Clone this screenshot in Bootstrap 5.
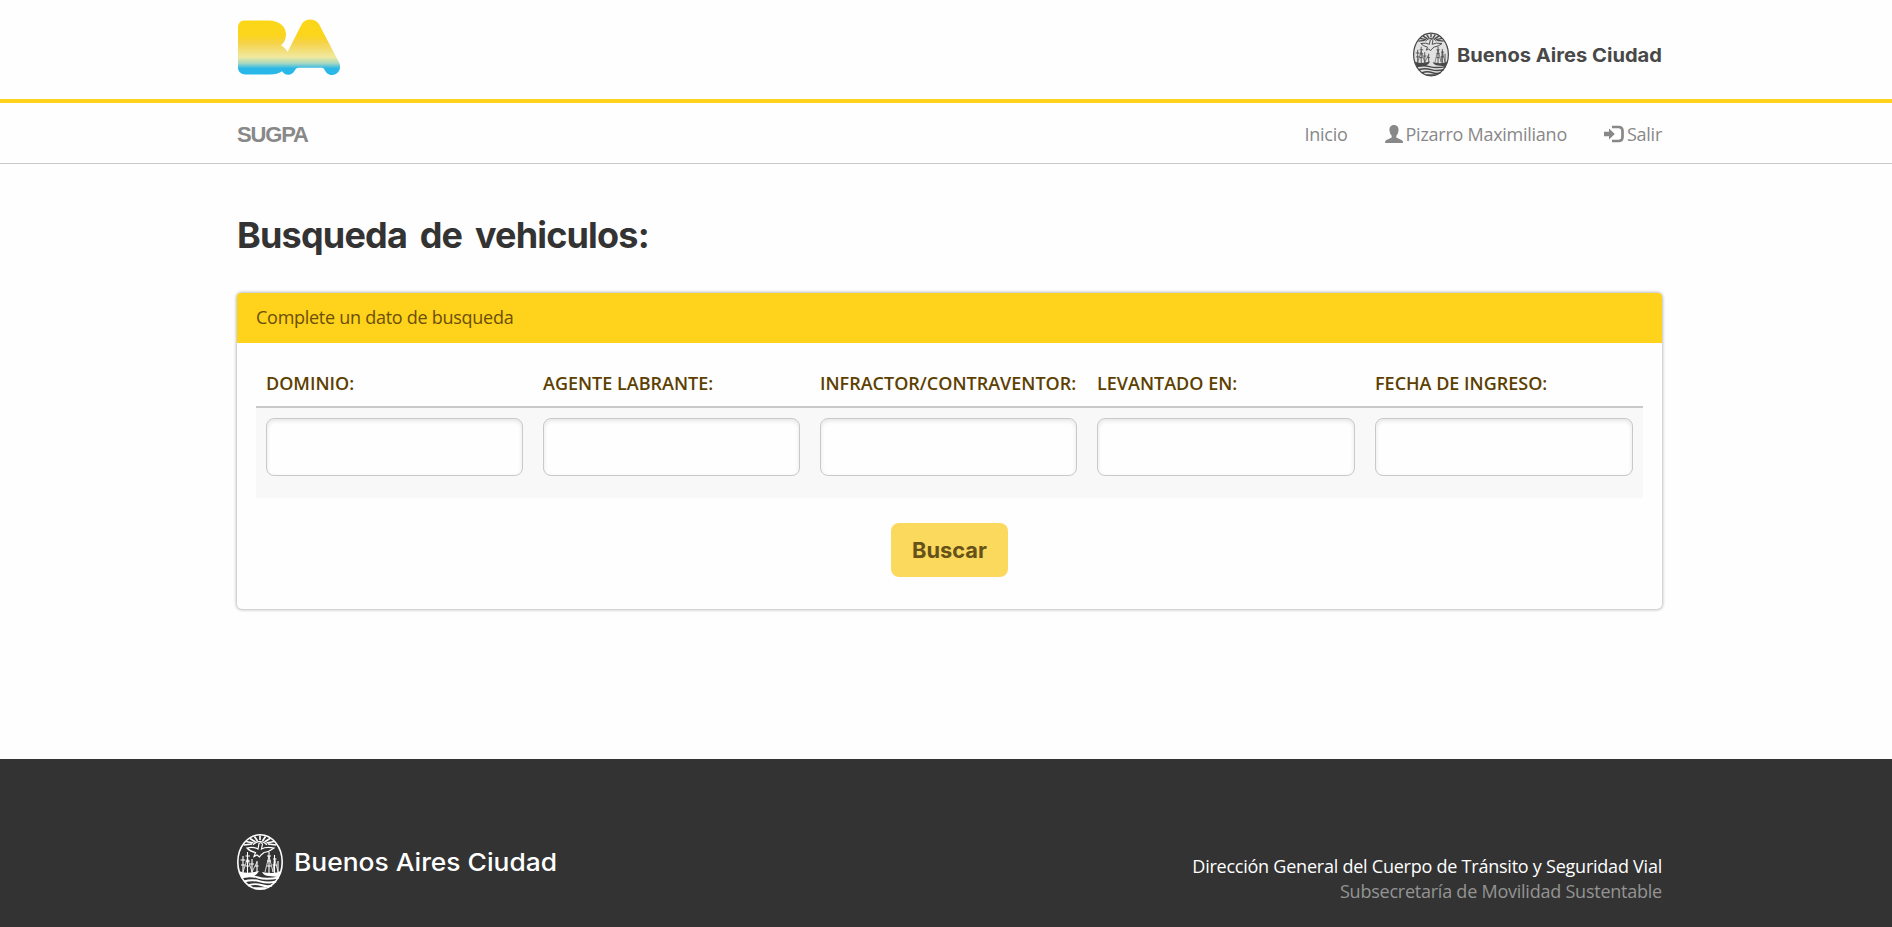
<!DOCTYPE html>
<html lang="es">
<head>
<meta charset="utf-8">
<meta name="viewport" content="width=device-width, initial-scale=1">
<title>SUGPA - Busqueda de vehiculos</title>
<link href="https://cdn.jsdelivr.net/npm/bootstrap@5.3.0/dist/css/bootstrap.min.css" rel="stylesheet">
<style>
body{font-family:"Open Sans",sans-serif;font-size:18px;line-height:25px;background:#fefefe;color:#333;overflow:hidden}
.wrap{width:1425px;margin-left:237px}
.topbar{height:103px;border-bottom:4px solid #ffd21c}
.ba-logo{margin-top:19px;margin-left:1px}
.site-nav{height:61px;border-bottom:1px solid #c9c9c9;padding:0}
.site-nav .wrap{height:60px}
.brand{font:700 22px/30px "Liberation Sans",sans-serif;color:#888;letter-spacing:-1.15px;margin-top:4px}
.site-nav .nav{gap:37px}
.site-nav .nav-link{padding:0;color:#888;font-weight:400;letter-spacing:-.26px;line-height:25px;margin-top:3px}
.site-nav .nav-link svg{margin:3px 3px 0 0;color:#888}
h1.title{font:700 36px/44px Inter,sans-serif;color:#333;margin:49px 0 36px;letter-spacing:-.82px;word-spacing:5px;white-space:nowrap}
.search-card{border:0;border-radius:5px;height:316px;background:#fefefe;box-shadow:0 0 3px 1px rgba(0,0,0,.26)}
.search-card .card-header{height:50px;padding:12px 19px;background:#ffd21c;color:#6b4f08;border:0;border-radius:4px 4px 0 0;font-weight:400;letter-spacing:-.27px}
.search-card .card-body{padding:19px}
.search-table{table-layout:fixed;margin:0;border-collapse:separate;border-spacing:0;--bs-table-bg:transparent}
.search-table .col-a{width:277px}
.search-table .col-b{width:278px}
.search-table th{height:46px;padding:9px 0 10px 10px;border-bottom:2px solid #c9c9c9;color:#5c4000;font-weight:600;font-size:18px;line-height:25px;white-space:nowrap}
.search-table td{height:90px;padding:10px;background:#f8f8f8;border:0}
.search-table .form-control{height:58px;border:1px solid #c9c9c9;border-radius:8px;background:#fefefe;box-shadow:inset 0 2px 4px rgba(0,0,0,.1)}
.btn-search{width:117px;height:54px;margin-top:25px;border:0;border-radius:8px;background:#fbd95d;color:#665219;font:700 21.8px/55px Inter,sans-serif;padding:0}
.btn-search:hover{background:#fbd95d;color:#665219}
.site-footer{height:168px;margin-top:150px;background:#333;color:#fff}
.footer-logo{margin-top:75px}
.footer-text{margin-top:95px;line-height:25px;letter-spacing:-.235px;white-space:nowrap}
.footer-text .sub{color:#949494}
</style>
</head>
<body>
<svg class="d-none">
  <symbol id="seal" viewBox="0 0 46 56">
    <ellipse cx="23" cy="28" rx="22.2" ry="27.2" fill="none" stroke="currentColor" stroke-width="1.6"/>
    <path d="M7 11L15 10M9 7.5L16.5 9M13 4.5L18.5 8M17.5 2.5L20.5 7M23 1.5V6M28.5 2.5L25.5 7M33 4.5L27.5 8M37 7.5L29.5 9M39 11L31 10" stroke="currentColor" stroke-width="1.7" fill="none"/>
    <path d="M16 10.7Q23 4 30 10.7" fill="none" stroke="currentColor" stroke-width="1.2"/>
    <path d="M10 14Q17 12.5 21 15L22 9.5Q24 7.8 25.5 10L24.5 15Q29 12.5 37 14Q32 18 27 18.5L24 21L22.5 23L20 21L17 22.5L18.5 18.5Q13 17.5 10 14Z" fill="none" stroke="currentColor" stroke-width="1.2"/>
    <path d="M6 22V39M10.5 18V39M15 25V39M20 27V38M32 18V39M37.5 21V39M41 27V38" stroke="currentColor" stroke-width="1.1"/>
    <path d="M3.5 26H8M4 31H8M8.5 22H13M8.5 27H13M8.5 32H12.5M13 30H17M18 32H21.5M30 22H34M30 27H34M30 32H34M36 25H39.5M35.5 31H39.5" stroke="currentColor" stroke-width="1.1"/>
    <path d="M6 38L10.5 24L15 38L20 28M28 38L32 22L36 38L37.5 24L41 38" fill="none" stroke="currentColor" stroke-width=".8"/>
    <path d="M2 37Q8 40.5 22 37Q20 41 16 42.5L5 44ZM44 37Q37 40.5 25 38Q27 42 32 42L41 43Z" fill="currentColor"/>
    <path d="M4 43.5Q13 41 21 43.5T42 43.5M7 47.5Q15 45 23 47.3T39 47.5M11 51.5Q18 49 24 51T35 51.5M17 54.3H29" fill="none" stroke="currentColor" stroke-width="1.9"/>
  </symbol>
</svg>

<header class="topbar">
  <div class="wrap d-flex justify-content-between align-items-start">
    <svg class="ba-logo" width="102" height="56" viewBox="18 19 102 56">
      <defs><linearGradient id="ba" gradientUnits="userSpaceOnUse" x1="0" y1="19" x2="0" y2="75">
        <stop offset="0" stop-color="#fbd717"/><stop offset=".29" stop-color="#fbd51b"/><stop offset=".42" stop-color="#f6d246"/><stop offset=".68" stop-color="#f0e9a0"/><stop offset=".79" stop-color="#a9d8c0"/><stop offset=".88" stop-color="#2cb8e6"/><stop offset="1" stop-color="#25b7ea"/>
      </linearGradient></defs>
      <path fill="url(#ba)" d="M25 20.4H48C60 20.4 66 27 66 34.5C66 39 64.2 43 61 45.4C64 47 66 49 67.7 51.8L81.5 24.5C85 17.7 95.5 17.7 99.2 24.5L119.6 63.5C121.5 69.5 117.5 75 112 75C108 75 106 72.5 104.7 70C104 68.4 102.8 67.8 101 67.8H79C76.5 67.8 75.7 69 74.5 71C71.8 75.8 65.3 76 62 71.2C58.5 73.4 55 74.4 50 74.4H25.5C21 74.4 18 71.7 18 67.5V27.5C18 23 20.6 20.4 25 20.4Z"/>
    </svg>
    <svg width="250" height="46" viewBox="0 0 250 46" style="margin-top:32px;color:#484848">
      <ellipse cx="19" cy="22.5" rx="17" ry="21.5" fill="#484848" fill-opacity=".16"/>
      <use href="#seal" x="1" y="0" width="36" height="45"/>
      <text x="45" y="30.3" textLength="205" lengthAdjust="spacingAndGlyphs" font-family="Inter, sans-serif" font-size="19.3" font-weight="700" fill="#484848">Buenos Aires Ciudad</text>
    </svg>
  </div>
</header>

<nav class="site-nav">
  <div class="wrap d-flex justify-content-between align-items-center">
    <span class="brand">SUGPA</span>
    <ul class="nav">
      <li class="nav-item"><a class="nav-link" href="#">Inicio</a></li>
      <li class="nav-item"><a class="nav-link d-flex" href="#"><svg width="18" height="18" viewBox="0 0 18 18"><path fill="currentColor" d="M9 0C12.2 0 13.8 2.3 13.5 5.5C13.3 7.8 12.5 9.5 11.3 10.8V12.5L17 15.3Q18 15.8 18 18H0Q0 15.8 1 15.3L6.7 12.5V10.8C5.5 9.5 4.7 7.8 4.5 5.5C4.2 2.3 5.8 0 9 0Z"/></svg>Pizarro Maximiliano</a></li>
      <li class="nav-item"><a class="nav-link d-flex" href="#"><svg width="20" height="18" viewBox="0 0 20 18"><path fill="currentColor" d="M0 6.7H5V3.5L10.8 9L5 14.5V11.3H0Z"/><path d="M8 2H14.5Q18.5 2 18.5 6V12Q18.5 16 14.5 16H8" fill="none" stroke="currentColor" stroke-width="2.7"/></svg>Salir</a></li>
    </ul>
  </div>
</nav>

<main class="wrap">
  <h1 class="title">Busqueda de vehiculos:</h1>
  <div class="card search-card">
    <div class="card-header">Complete un dato de busqueda</div>
    <div class="card-body text-center">
      <table class="table search-table text-start">
        <colgroup><col class="col-a"><col class="col-a"><col class="col-a"><col class="col-b"><col class="col-b"></colgroup>
        <thead><tr><th>DOMINIO:</th><th>AGENTE LABRANTE:</th><th>INFRACTOR/CONTRAVENTOR:</th><th>LEVANTADO EN:</th><th>FECHA DE INGRESO:</th></tr></thead>
        <tbody><tr>
          <td><input type="text" class="form-control" aria-label="Dominio"></td>
          <td><input type="text" class="form-control" aria-label="Agente labrante"></td>
          <td><input type="text" class="form-control" aria-label="Infractor"></td>
          <td><input type="text" class="form-control" aria-label="Levantado en"></td>
          <td><input type="text" class="form-control" aria-label="Fecha de ingreso"></td>
        </tr></tbody>
      </table>
      <button type="button" class="btn btn-search">Buscar</button>
    </div>
  </div>
</main>

<footer class="site-footer d-flex">
  <div class="wrap d-flex justify-content-between align-items-start">
    <svg class="footer-logo" width="322" height="56" viewBox="0 0 322 56">
      <use href="#seal" width="46" height="56"/>
      <text x="57" y="37" textLength="263" lengthAdjust="spacingAndGlyphs" font-family="Inter, sans-serif" font-size="24.3" font-weight="500" fill="#fff">Buenos Aires Ciudad</text>
    </svg>
    <div class="footer-text text-end">
      <div>Dirección General del Cuerpo de Tránsito y Seguridad Vial</div>
      <div class="sub">Subsecretaría de Movilidad Sustentable</div>
    </div>
  </div>
</footer>
<script src="https://cdn.jsdelivr.net/npm/bootstrap@5.3.0/dist/js/bootstrap.bundle.min.js"></script>
</body>
</html>
